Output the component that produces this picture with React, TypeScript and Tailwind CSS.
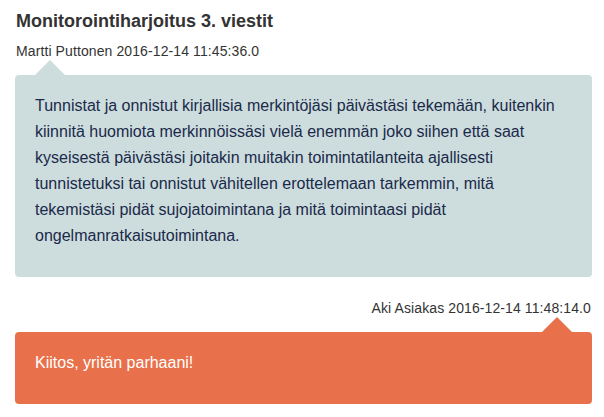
import React from 'react';

type Message = {
  author: string;
  time: string;
  text: string;
  own?: boolean;
};

const messages: Message[] = [
  {
    author: 'Martti Puttonen',
    time: '2016-12-14 11:45:36.0',
    text: 'Tunnistat ja onnistut kirjallisia merkintöjäsi päivästäsi tekemään, kuitenkin kiinnitä huomiota merkinnöissäsi vielä enemmän joko siihen että saat kyseisestä päivästäsi joitakin muitakin toimintatilanteita ajallisesti tunnistetuksi tai onnistut vähitellen erottelemaan tarkemmin, mitä tekemistäsi pidät sujojatoimintana ja mitä toimintaasi pidät ongelmanratkaisutoimintana.',
  },
  {
    author: 'Aki Asiakas',
    time: '2016-12-14 11:48:14.0',
    text: 'Kiitos, yritän parhaani!',
    own: true,
  },
];

const MessageItem: React.FC<{ msg: Message }> = ({ msg }) => {
  return (
    <div className="flex flex-col">
      {/* Meta line */}
      <div className={`text-[14px] leading-[18px] tracking-[0.1px] text-[#333] ${msg.own ? 'text-right pr-px' : 'pl-px'}`}>
        {msg.author} {msg.time}
      </div>

      {/* Bubble */}
      <div className="relative mt-[15px]">
        <div
          className={`absolute -top-[15px] w-0 h-0 border-x-[15px] border-x-transparent border-b-[15px] ${
            msg.own ? 'right-[20px] border-b-[#e8714c]' : 'left-[20px] border-b-[#cddcdd]'
          }`}
        />
        <div
          className={`rounded-[4px] px-5 pt-[18px] pb-[18px] ${
            msg.own ? 'bg-[#e8714c] text-white' : 'bg-[#cddcdd] text-[#1a2a4a]'
          }`}
        >
          <p className="text-[16px] leading-[26px] mb-[10px]">{msg.text}</p>
        </div>
      </div>
    </div>
  );
};

export default function App() {
  return (
    <div className="w-[604px] h-[417px] bg-white pl-[15px] pr-[12px] pt-[8px] overflow-hidden font-['Liberation_Sans',Arial,sans-serif]">
      <h2 className="text-[18px] leading-[26px] font-bold text-[#333] pl-px">Monitorointiharjoitus 3. viestit</h2>
      <div className="mt-[8px] flex flex-col gap-[22px]">
        {messages.map((m, i) => (
          <MessageItem key={i} msg={m} />
        ))}
      </div>
    </div>
  );
}
